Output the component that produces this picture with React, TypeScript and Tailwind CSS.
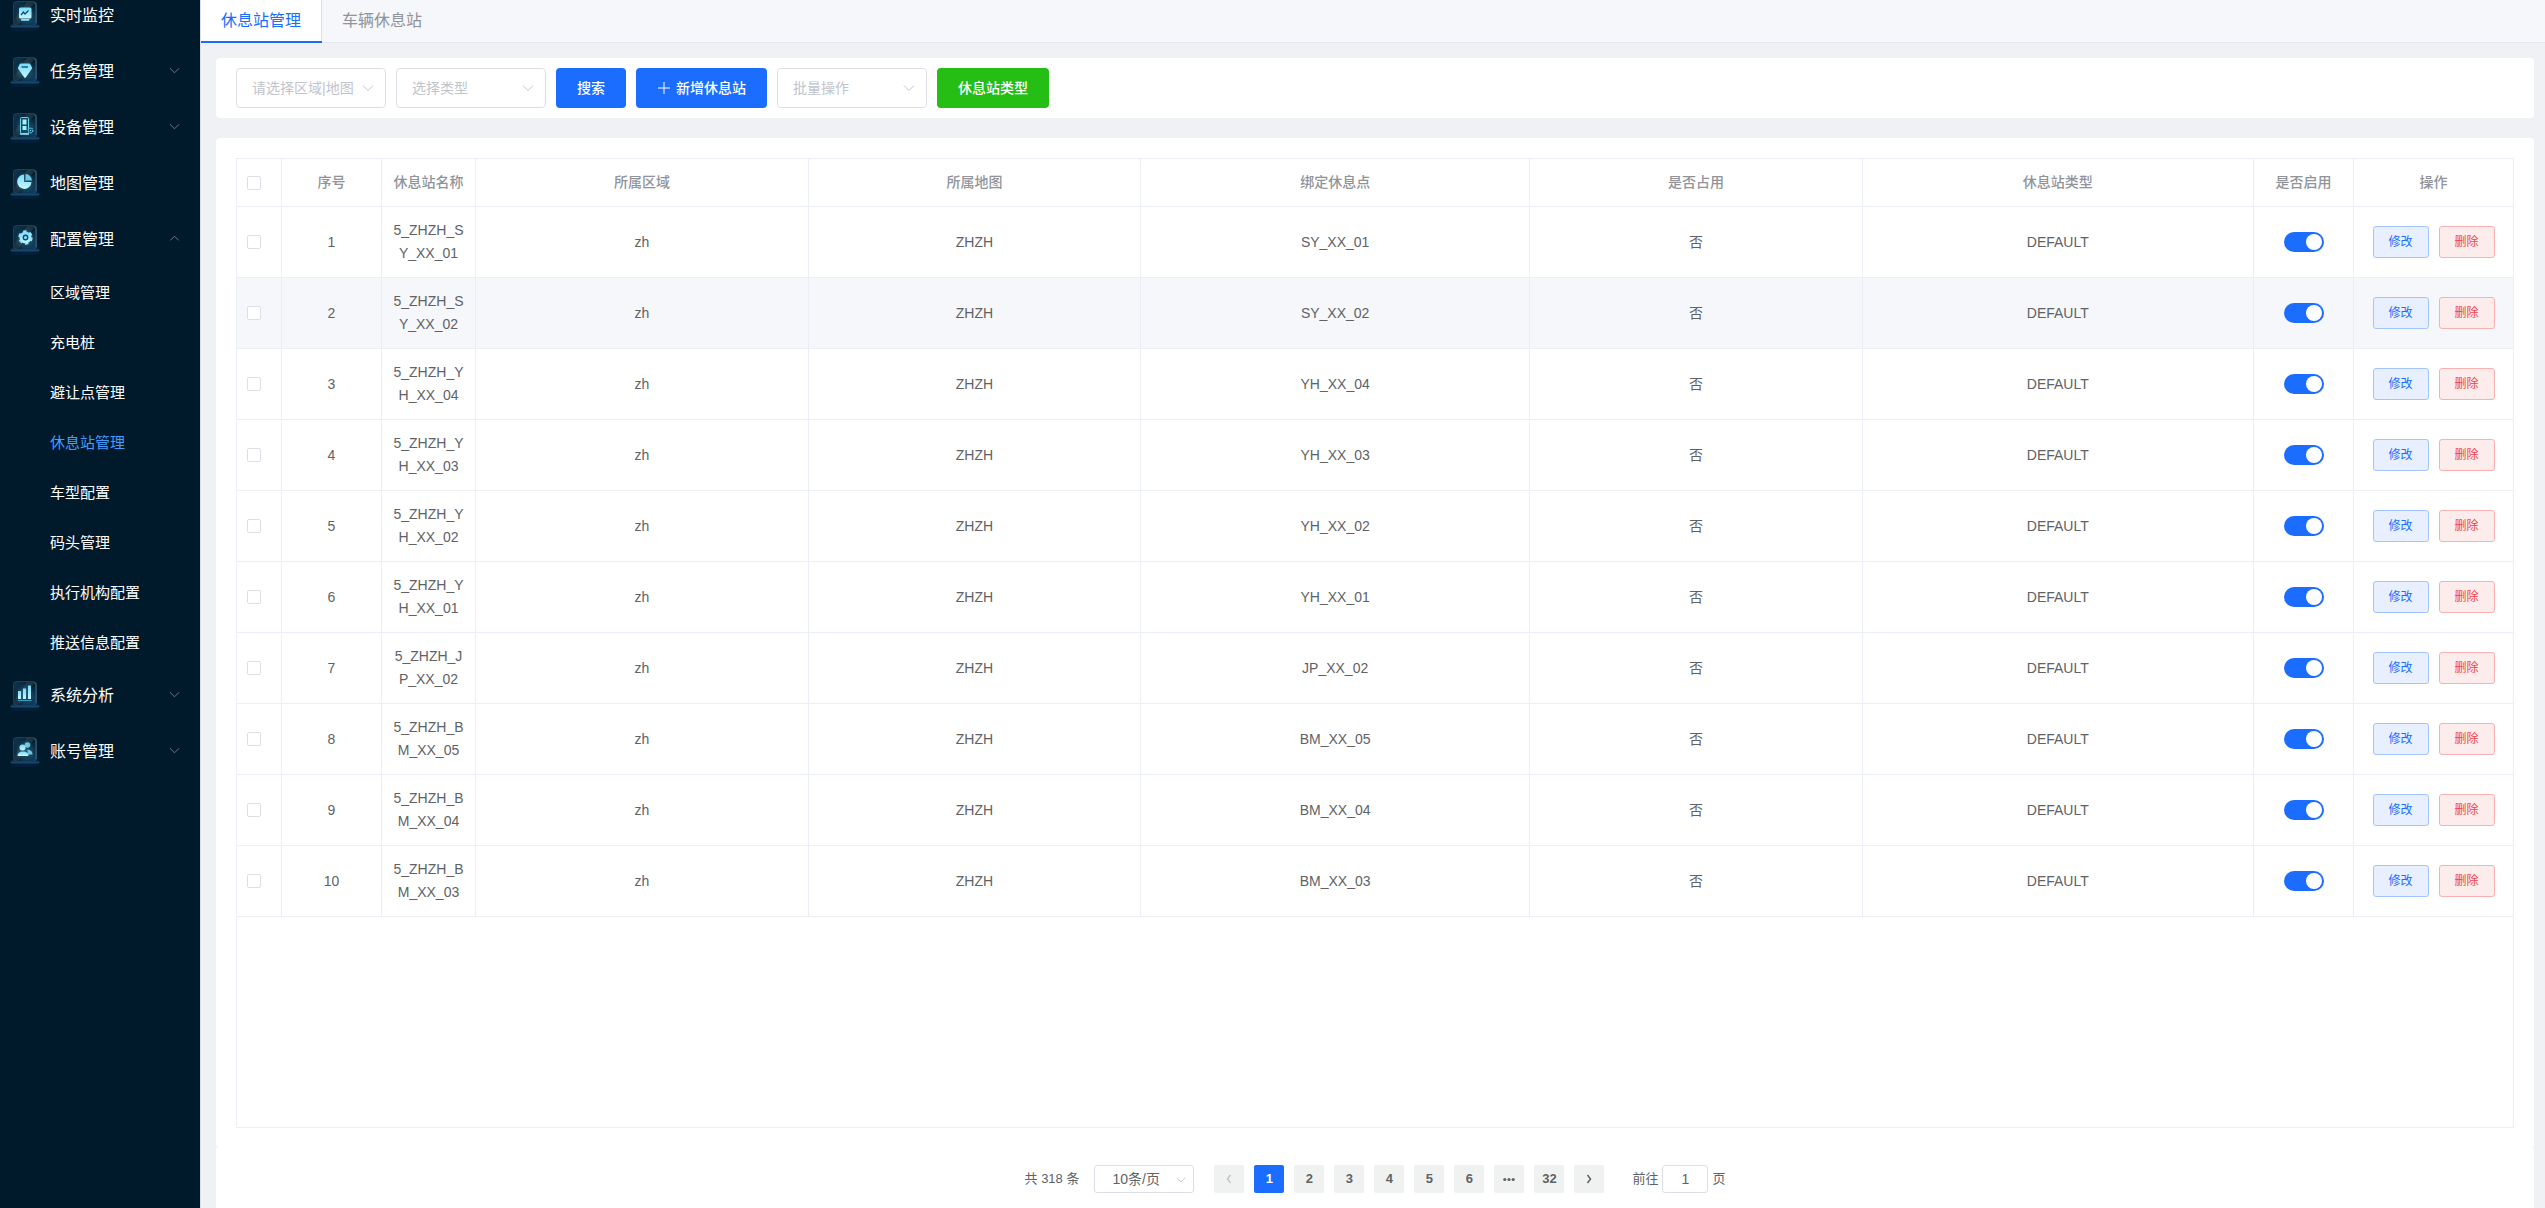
// App.tsx
import { useState } from 'react'
import type { ReactNode } from 'react'

type MenuItem = {
  label: string
  icon: ReactNode
  arrow?: 'up' | 'down'
  children?: string[]
}

const MENU: MenuItem[] = [
  {
    label: '实时监控',
    icon: (
      <>
        <rect x="9" y="6.500" width="12.500" height="11" rx="1.500" fill="url(#glow)" />
        <path d="M11 14l2.500-3 1.500 2 3.500-3.500" fill="none" stroke="#0d4a6b" strokeWidth="1.200" />
        <rect x="11" y="18" width="8.500" height="1.800" rx="0.800" fill="#8fe4ff" />
      </>
    ),
  },
  {
    label: '任务管理',
    arrow: 'down',
    icon: (
      <>
        <path d="M10.500 6.500h8.500q1 0 1.500 1l1.500 3q.300.800-.300 1.500L15.700 20.500q-.7.800-1.400 0L8.300 12q-.5-.7-.2-1.500l1.400-3q.5-1 1.500-1z" fill="url(#glow)" />
        <path d="M11.500 10h6.500" stroke="#0d4a6b" strokeWidth="1.300" />
      </>
    ),
  },
  {
    label: '设备管理',
    arrow: 'down',
    icon: (
      <>
        <rect x="10.500" y="4.500" width="8" height="16" rx="1" fill="#124a63" stroke="#6fd3ee" />
        <rect x="12.500" y="6.500" width="4" height="5" fill="#a8efff" />
        <rect x="12.500" y="13" width="4" height="4" fill="#a8efff" />
        <path d="M10 21h9" stroke="#8fe4ff" strokeWidth="1.500" />
        <circle cx="20.500" cy="17.500" r="2.300" fill="#0b2c42" stroke="#58b9d9" strokeWidth="1.500" strokeDasharray="1.500 .6" />
        <circle cx="20.500" cy="17.500" r=".8" fill="#8fe4ff" />
      </>
    ),
  },
  {
    label: '地图管理',
    icon: (
      <>
        <path d="M14 5.500a7.200 7.200 0 1 0 7.500 7.500h-7.500z" fill="url(#glow)" />
        <path d="M15.500 5a6.800 6.800 0 0 1 6.500 6.500h-6.500z" fill="#6cc8e4" />
      </>
    ),
  },
  {
    label: '配置管理',
    arrow: 'up',
    icon: (
      <>
        <circle cx="15.500" cy="12.500" r="6" fill="url(#glow)" />
        <circle cx="15.500" cy="12.500" r="6.200" fill="none" stroke="#8fe4ff" strokeWidth="2" strokeDasharray="3.500 3" />
        <circle cx="15.500" cy="12.500" r="2.200" fill="#8fe4ff" stroke="#0d4a6b" strokeWidth="1.400" />
      </>
    ),
    children: ['区域管理', '充电桩', '避让点管理', '休息站管理', '车型配置', '码头管理', '执行机构配置', '推送信息配置'],
  },
  {
    label: '系统分析',
    arrow: 'down',
    icon: (
      <>
        <rect x="8" y="10" width="3" height="8" fill="url(#glow)" />
        <rect x="13" y="7.500" width="3" height="10.500" fill="url(#glow)" />
        <rect x="18" y="4.500" width="3" height="13.500" fill="url(#glow)" />
        <path d="M8 19.500h13.500" stroke="#3f9cc0" />
      </>
    ),
  },
  {
    label: '账号管理',
    arrow: 'down',
    icon: (
      <>
        <circle cx="17.500" cy="8" r="2.800" fill="#6cc8e4" />
        <path d="M17.500 12.500q5 .5 5 5h-5z" fill="#6cc8e4" />
        <circle cx="12.500" cy="10.500" r="3" fill="url(#glow)" />
        <path d="M7.500 19q0-4.500 5.500-4.500t5.500 4.500z" fill="url(#glow)" />
      </>
    ),
  },
]

const ROWS = [
  { name: '5_ZHZH_SY_XX_01', point: 'SY_XX_01' },
  { name: '5_ZHZH_SY_XX_02', point: 'SY_XX_02' },
  { name: '5_ZHZH_YH_XX_04', point: 'YH_XX_04' },
  { name: '5_ZHZH_YH_XX_03', point: 'YH_XX_03' },
  { name: '5_ZHZH_YH_XX_02', point: 'YH_XX_02' },
  { name: '5_ZHZH_YH_XX_01', point: 'YH_XX_01' },
  { name: '5_ZHZH_JP_XX_02', point: 'JP_XX_02' },
  { name: '5_ZHZH_BM_XX_05', point: 'BM_XX_05' },
  { name: '5_ZHZH_BM_XX_04', point: 'BM_XX_04' },
  { name: '5_ZHZH_BM_XX_03', point: 'BM_XX_03' },
]

const HEADERS = ['序号', '休息站名称', '所属区域', '所属地图', '绑定休息点', '是否占用', '休息站类型', '是否启用', '操作']

function Chevron({ className, dir = 'down' }: { className: string; dir?: 'up' | 'down' | 'left' | 'right' }) {
  const d = {
    up: 'M1.500 8l4.500-4.500L10.500 8',
    down: 'M1 3.500l5 5 5-5',
    left: 'M7.500 2L4.500 6l3 4',
    right: 'M4.500 2l3 4-3 4',
  }[dir]
  return (
    <svg viewBox="0 0 12 12" className={className} fill="none" stroke="currentColor" aria-hidden="true">
      <path d={d} />
    </svg>
  )
}

// Glass tile with a lit base; the glyph goes on top
function MenuIcon({ children }: { children: ReactNode }) {
  return (
    <svg viewBox="0 0 30 30" className="size-[30px] shrink-0" aria-hidden="true">
      <ellipse cx="15" cy="28.500" rx="14" ry="1.500" fill="#04203a" />
      <rect x="0.500" y="23.500" width="29" height="3" rx="1.500" fill="url(#base)" />
      <rect x="3.500" y="0.500" width="23" height="24" rx="3" fill="url(#tile)" stroke="#15405f" />
      <circle cx="15" cy="14" r="11" fill="url(#halo)" />
      <path d="M17 1h8l-17 23H4v-5z" fill="#fff" opacity="0.080" />
      <path d="M24 1.500q2 .5 2 2.500v18" fill="none" stroke="#456d89" strokeWidth="0.800" />
      {children}
    </svg>
  )
}

function Sidebar() {
  return (
    <aside className="w-[200px] shrink-0 overflow-hidden bg-[#001a2c] text-white">
      <svg className="absolute size-0" aria-hidden="true">
        <defs>
          <linearGradient id="tile" x1="0" y1="0" x2="1" y2="1">
            <stop offset="0" stopColor="#0f3552" />
            <stop offset="0.500" stopColor="#08202f" />
            <stop offset="1" stopColor="#164262" />
          </linearGradient>
          <linearGradient id="base" x1="0" y1="0" x2="0" y2="1">
            <stop offset="0" stopColor="#0b2f4c" />
            <stop offset="1" stopColor="#17507c" />
          </linearGradient>
          <radialGradient id="halo">
            <stop offset="0" stopColor="#3b9cc4" stopOpacity="0.500" />
            <stop offset="1" stopColor="#3b9cc4" stopOpacity="0" />
          </radialGradient>
          <linearGradient id="glow" x1="0" y1="0" x2="0" y2="1">
            <stop offset="0" stopColor="#76dcfb" />
            <stop offset="1" stopColor="#c8f6ff" />
          </linearGradient>
        </defs>
      </svg>
      {/* the list is scrolled down a little */}
      <ul className="-mt-3">
        {MENU.map((item) => (
          <li key={item.label}>
            <a href="#" className="flex h-14 items-center pl-[10px] pr-5 text-base">
              <MenuIcon>{item.icon}</MenuIcon>
              <span className="ml-[10px] flex-1">{item.label}</span>
              {item.arrow && <Chevron dir={item.arrow} className="mb-1 size-[11px] text-[#73828d]" />}
            </a>
            {item.children && (
              <ul>
                {item.children.map((child) => (
                  <li key={child}>
                    <a
                      href="#"
                      className={`flex h-[50px] items-center pl-[50px] text-[15px] ${child === '休息站管理' ? 'text-[#409eff]' : ''}`}
                    >
                      {child}
                    </a>
                  </li>
                ))}
              </ul>
            )}
          </li>
        ))}
      </ul>
    </aside>
  )
}

function FilterSelect({ placeholder }: { placeholder: string }) {
  return (
    <div className="relative w-[150px]">
      <select
        aria-label={placeholder}
        className="h-10 w-full appearance-none rounded border border-[#dcdfe6] bg-white pl-[15px] pr-7 text-sm text-[#c0c4cc]"
      >
        <option>{placeholder}</option>
      </select>
      <Chevron className="pointer-events-none absolute right-3 top-[14px] size-3 text-[#c0c4cc]" />
    </div>
  )
}

function Toolbar() {
  return (
    <div className="flex gap-[10px] rounded bg-white px-5 py-[10px]">
      <FilterSelect placeholder="请选择区域|地图" />
      <FilterSelect placeholder="选择类型" />
      <button className="h-10 rounded bg-[#1a6dff] px-[21px] text-sm font-medium text-white">搜索</button>
      <button className="flex h-10 items-center gap-[5px] rounded bg-[#1a6dff] px-[21px] text-sm font-medium text-white">
        <svg viewBox="0 0 14 14" className="size-[14px]" stroke="currentColor" aria-hidden="true">
          <path d="M7 1v12M1 7h12" />
        </svg>
        新增休息站
      </button>
      <FilterSelect placeholder="批量操作" />
      <button className="h-10 rounded bg-[#24be14] px-[21px] text-sm font-medium text-white">休息站类型</button>
    </div>
  )
}

function Check({ label }: { label: string }) {
  return (
    <input
      type="checkbox"
      aria-label={label}
      className="block size-[14px] appearance-none rounded-xs border border-[#dcdfe6] bg-white checked:border-[#1a6dff] checked:bg-[#1a6dff]"
    />
  )
}

function StationTable() {
  const [enabled, setEnabled] = useState<boolean[]>(ROWS.map(() => true))
  const toggle = (i: number) => setEnabled((prev) => prev.map((v, n) => (n === i ? !v : v)))

  const cell = 'border-b border-r border-[#ebeef5] px-[11px] py-3'

  return (
    <div className="min-h-0 flex-1 overflow-hidden border border-[#ebeef5]">
      <table className="w-full table-fixed border-separate border-spacing-0 text-center text-sm leading-[23px] text-[#606266]">
        <colgroup>
          <col className="w-[45px]" />
          <col className="w-[100px]" />
          <col className="w-[94px]" />
          <col />
          <col className="w-[14.6%]" />
          <col className="w-[17.1%]" />
          <col className="w-[14.6%]" />
          <col className="w-[17.2%]" />
          <col className="w-[100px]" />
          <col className="w-[159px]" />
        </colgroup>
        <thead className="text-[#909399]">
          <tr>
            <th className={`${cell} pl-[10px]`}><Check label="全选" /></th>
            {HEADERS.map((h) => (
              <th key={h} className={`${cell} font-medium last:border-r-0`}>{h}</th>
            ))}
          </tr>
        </thead>
        <tbody>
          {ROWS.map((row, i) => (
            <tr key={row.name} className={`h-[71px] ${i === 1 ? 'bg-[#f5f7fa]' : ''}`}>
              <td className={`${cell} pl-[10px]`}><Check label={`选择 ${row.name}`} /></td>
              <td className={cell}>{i + 1}</td>
              <td className={`${cell} break-all`}>{row.name}</td>
              <td className={cell}>zh</td>
              <td className={cell}>ZHZH</td>
              <td className={cell}>{row.point}</td>
              <td className={cell}>否</td>
              <td className={cell}>DEFAULT</td>
              <td className={cell}>
                <input
                  type="checkbox"
                  role="switch"
                  aria-label={`启用 ${row.name}`}
                  checked={enabled[i]}
                  onChange={() => toggle(i)}
                  className="mx-auto flex h-5 w-10 appearance-none items-center rounded-full bg-[#dcdfe6] px-[2px] before:size-4 before:rounded-full before:bg-white checked:justify-end checked:bg-[#1a6dff]"
                />
              </td>
              <td className={`${cell} border-r-0`}>
                <div className="flex justify-center gap-[10px] text-xs">
                  <button className="h-8 w-14 rounded-[3px] border border-[#a3c5ff] bg-[#e8f0ff] text-[#1a6dff]">修改</button>
                  <button className="h-8 w-14 rounded-[3px] border border-[#f9b0b0] bg-[#fdecec] text-[#f04444]">删除</button>
                </div>
              </td>
            </tr>
          ))}
        </tbody>
      </table>
    </div>
  )
}

function Pagination() {
  const page = 'flex h-7 w-[30px] items-center justify-center rounded-xs text-[13px] font-bold'
  return (
    <div className="flex h-[60px] items-center justify-center bg-white pt-[2px] text-[13px] text-[#606266]">
      <span>共 318 条</span>
      <div className="relative ml-[15px] w-[100px]">
        <select
          aria-label="每页条数"
          className="block h-7 w-full appearance-none rounded-[3px] border border-[#dcdfe6] bg-white pl-[17px] text-sm leading-5"
        >
          <option>10条/页</option>
        </select>
        <Chevron className="pointer-events-none absolute right-2 top-[10px] size-[10px] text-[#c0c4cc]" />
      </div>
      <div className="ml-5 flex gap-[10px]">
        <button aria-label="上一页" disabled className={`${page} bg-[#f0f2f2] text-[#c0c4cc]`}>
          <Chevron dir="left" className="size-3 stroke-[1.5]" />
        </button>
        <button className={`${page} bg-[#1a6dff] text-white`}>1</button>
        {['2', '3', '4', '5', '6', '•••', '32'].map((p) =>
          p === '•••' ? (
            <button key={p} aria-label="更多" className={`${page} bg-[#f0f2f2]`}>
              <svg viewBox="0 0 12 12" className="size-3" fill="currentColor" aria-hidden="true">
                <circle cx="1.800" cy="6.500" r="1.600" />
                <circle cx="6" cy="6.500" r="1.600" />
                <circle cx="10.200" cy="6.500" r="1.600" />
              </svg>
            </button>
          ) : (
            <button key={p} className={`${page} bg-[#f0f2f2]`}>{p}</button>
          )
        )}
        <button aria-label="下一页" className={`${page} bg-[#f0f2f2]`}>
          <Chevron dir="right" className="size-3 stroke-[1.5]" />
        </button>
      </div>
      <label className="ml-7 flex items-center gap-1">
        前往
        <input
          defaultValue="1"
          className="h-7 w-[46px] rounded-[3px] border border-[#dcdfe6] bg-white text-center text-sm"
        />
        页
      </label>
    </div>
  )
}

export default function App() {
  return (
    <div className="flex h-screen overflow-hidden bg-[#f0f1f5] font-['Liberation_Sans','Noto_Sans_CJK_SC',sans-serif]">
      <Sidebar />
      <main className="flex min-w-0 flex-1 flex-col border-l border-[#dcdfe6]">
        {/* Tabs */}
        <div role="tablist" className="flex h-[43px] shrink-0 border-b border-[#e4e7ed] bg-[#f5f7fa] text-base">
          <button
            role="tab"
            aria-selected="true"
            className="relative h-[43px] border-r border-[#dcdfe6] bg-white px-5 pb-[2px] text-[#1a6dff] after:absolute after:bottom-0 after:left-0 after:-right-px after:h-[2px] after:bg-[#1a6dff]"
          >
            休息站管理
          </button>
          <button role="tab" aria-selected="false" className="px-5 pb-px text-[#909399]">车辆休息站</button>
        </div>

        <div className="flex min-h-0 flex-1 flex-col pl-[15px] pr-[11px] pt-[15px]">
          <Toolbar />
          <section className="mt-5 flex min-h-0 flex-1 flex-col rounded bg-white p-5">
            <StationTable />
          </section>
          <Pagination />
        </div>
      </main>
    </div>
  )
}
